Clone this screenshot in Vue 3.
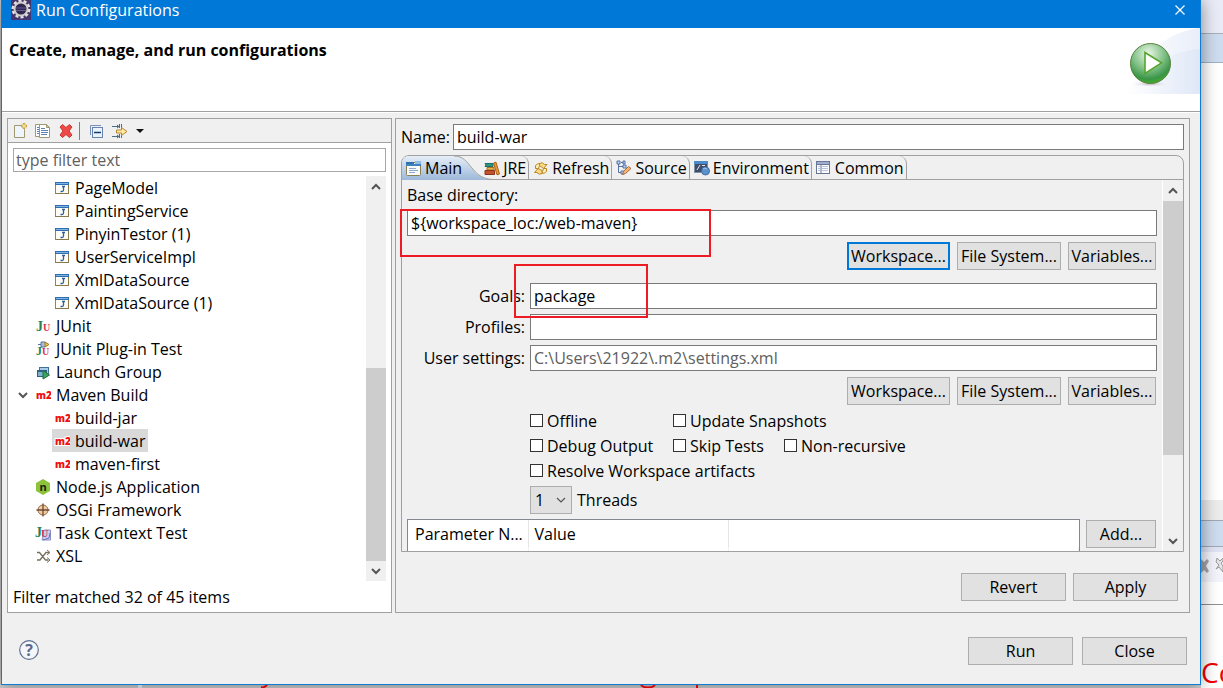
<script setup>
import { ref } from 'vue'

const icons = {
  java: '<rect x="1.5" y="2.5" width="13" height="11" fill="#fffdf5" stroke="#8a7a4a"/><path d="M1 2h14v3H1z" fill="#2f6fb0"/><path d="M2 3.5h12" stroke="#7fb4e4"/><path d="M1.500 5v8.500" stroke="#6c89a8"/><path d="M9.500 6.500v3.500q0 1.500-1.500 1.500h-1.500M8 6.500h3" stroke="#2c62a0" stroke-width="1.300" fill="none"/>',
  junit: '<text x="1" y="13" font-family="Liberation Serif, serif" font-weight="bold" font-size="14" fill="#2a8050">J</text><text x="8" y="13" font-family="Liberation Serif, serif" font-weight="bold" font-size="10" fill="#d8344f">U</text>',
  plugin: '<path d="M3 3.500h10" stroke="#52739f"/><path d="M6 1h4l2 2.500-2 2.500H6z" fill="#a9bfdc" stroke="#52739f"/><path d="M10 1l4 2.500-4 2.500z" fill="#f2c14a" stroke="#a07a20"/><text x="1" y="14" font-family="Liberation Serif, serif" font-weight="bold" font-size="12" fill="#2a8050">J</text><text x="7" y="14" font-family="Liberation Serif, serif" font-weight="bold" font-size="10" fill="#d8344f">U</text>',
  group: '<rect x="4.500" y="3.500" width="9" height="6" fill="#a8cbea" stroke="#3f7298"/><rect x="2.500" y="6.500" width="9" height="6" fill="#7fb0d4" stroke="#2f6184"/><path d="M2 7h10" stroke="#2f6184" stroke-width="2"/><path d="M8 6.500l6.500 4.500L8 15z" fill="#3aa55c" stroke="#1d7038"/>',
  maven: '<text x="1" y="12" font-family="Open Sans, sans-serif" font-weight="800" font-size="10" fill="#f01010" stroke="#fff" stroke-width="2" paint-order="stroke">m2</text>',
  node: '<path d="M8 0l7 4v8l-7 4-7-4V4z" fill="#8cc23c"/><text x="8" y="11.500" text-anchor="middle" font-family="Open Sans, sans-serif" font-weight="bold" font-size="11" fill="#16220c">n</text>',
  osgi: '<circle cx="8" cy="8" r="5" fill="#f0cfa4" stroke="#9a6a48"/><path d="M8 1.500v13M1.500 8h13" stroke="#704836" stroke-width="1.300"/>',
  task: '<path d="M9 5h6.500v10H7z" fill="#c9cdf0" stroke="#8a8fc8"/><text x="0" y="12" font-family="Liberation Serif, serif" font-weight="bold" font-size="14" fill="#2a8050">J</text><text x="6" y="12" font-family="Liberation Serif, serif" font-weight="bold" font-size="10" fill="#c83450">U</text><path d="M8 15l6-2 1-5" stroke="#6a70b8" fill="none"/>',
  xsl: '<path d="M2 4.500h2.500l6 7.500h3M2 12h3l6-7.500h3" fill="none" stroke="#75705c" stroke-width="1.300"/><path d="M12 2l3 2.500-3 2.500M12 9.500l3 2.500-3 2.500" fill="none" stroke="#75705c"/>',
  main: '<rect x=".5" y="2.500" width="14" height="13" rx="1" fill="#f7fbff" stroke="#8a8250"/><path d="M0 2h8v2H0z" fill="#2f6fb0"/><path d="M9 1h6v3H9z" fill="#8fbde6"/><path d="M0 5h15" stroke="#3f80bd" stroke-width="2"/><path d="M3 8.500h7M3 10.500h9M3 12.500h6" stroke="#8fa9c6"/>',
  jre: '<path d="M1 3.500h8v3H1l1-1.500z" fill="#2e9486" stroke="#1d6f66"/><path d="M3 7.500h7v2.500H3z" fill="#e8b24a" stroke="#a87520"/><path d="M1 10.500h9.500v4H1z" fill="#c4512e" stroke="#8c3518"/><path d="M9.500 3l2.500-.8 3.500 11.800-2.500.8z" fill="#eb9638" stroke="#ad6212"/>',
  refresh: '<path d="M6.500 5.500V3.500q3-2 5 1h2.500l-3.500 4-4-3z" fill="#f9dc83" stroke="#bd8622"/><path d="M2.500 8.500V5.500q2-2 4-2v2L5.500 8.500z" fill="#fdeeb8" stroke="#bd8622"/><path d="M9 10.500v3q-3 2-5-1H1.500l3.500-4 4 2z" fill="#f9dc83" stroke="#bd8622"/><path d="M13.500 8.500v3q-2 2-4 2v-2l1-3z" fill="#fdeeb8" stroke="#bd8622"/>',
  source: '<path d="M2.500 3v9.500h4M2.500 6.500h5M5 2.500h2" fill="none" stroke="#5573a5"/><path d="M1 1h3v3H1zM7 1h2v3H7zM7 5h3v3H7zM5 11h3v3H5z" fill="#c5d6f2" stroke="#5573a5"/><path d="M6.500 14.500l1-3 5-5 2.500 2-5.500 5z" fill="#f2b873" stroke="#a8683a"/>',
  env: '<rect x=".5" y="1.500" width="13" height="11" fill="#3e4c65" stroke="#7f90ab"/><path d="M0 1h14v3H0z" fill="#4b8bca"/><path d="M3 10l3-5M8 5.500h3" stroke="#dbe7f5"/><circle cx="11.500" cy="11" r="4" fill="#5a92cc" stroke="#416fa6"/><path d="M9 9q2-2 4 0" stroke="#a5cbea" fill="none"/>',
  common: '<rect x=".5" y="1.500" width="13" height="12" fill="#fdfeff" stroke="#6a7494"/><path d="M1 2h12v2H1z" fill="#9db0d0"/><path d="M5 4v9M1 4.500h12" stroke="#6a7494"/><path d="M2 6.500h2M6 6.500h6M2 8.500h2M6 8.500h6M2 10.500h2M6 10.500h6" stroke="#b8c4dc"/>',
  newdoc: '<path d="M2.500 2.500h7l3 4v8h-10z" fill="#eef5fc" stroke="#a09870"/><path d="M12 0v6M9 3h6" stroke="#c9a240" stroke-width="2.400"/><path d="M12 1v4M10 3h4" stroke="#fff0b0"/>',
  copy: '<path d="M.5 1.500h8v12h-8z" fill="#fff" stroke="#a09870"/><path d="M2 4.500h2M2 6.500h2M2 8.500h2M2 10.500h2" stroke="#5f82ae"/><path d="M4.500 1.500h7l3 3v10h-10z" fill="#fff" stroke="#a09870"/><path d="M11.500 1.500v3h3z" fill="#e4c878" stroke="#a09870"/><path d="M6 5.500h4M6 7.500h7M6 9.500h7M6 11.500h6" stroke="#5f82ae"/>',
  remove: '<path d="M2 4l2.500-2.500L8 4.500l3.500-3L14 4l-3 4 3 4-2.500 2.500L8 11.500l-3.500 3L2 12l3-4z" fill="#ee4b48" stroke="#c83634"/>',
  collapse: '<path d="M2.500 12V2.500H13" fill="none" stroke="#7890b8"/><rect x="4.500" y="4.500" width="10" height="10" fill="#eaf3fc" stroke="#6683b0"/><path d="M6 9.500h7" stroke="#123c70" stroke-width="1.500"/>',
  filter: '<path d="M0 3.500h7M0 13.500h7M7.500 1v4M9.500 1v4M7.500 11v4M9.500 12v3" stroke="#4c6c86"/><path d="M5 1.500l2.500 2L5 5.500zM5 11.500l2.500 2-2.500 2z" fill="#4c6c86"/><path d="M4.500 7h5V4.500L15 8.500l-5.500 4V10h-5z" fill="#ffe9a6" stroke="#b7842c"/>',
  close: '<path d="M3.500 3.500l9 9M12.500 3.500l-9 9" stroke="#fff" stroke-width="1.200"/>',
  down: '<path d="M4 6l4 4 4-4" fill="none" stroke="#555" stroke-width="2"/>',
  up: '<path d="M4 10l4-4 4 4" fill="none" stroke="#555" stroke-width="2"/>',
}

const tree = [
  { icon: 'java', text: 'PageModel', child: true },
  { icon: 'java', text: 'PaintingService', child: true },
  { icon: 'java', text: 'PinyinTestor (1)', child: true },
  { icon: 'java', text: 'UserServiceImpl', child: true },
  { icon: 'java', text: 'XmlDataSource', child: true },
  { icon: 'java', text: 'XmlDataSource (1)', child: true },
  { icon: 'junit', text: 'JUnit' },
  { icon: 'plugin', text: 'JUnit Plug-in Test' },
  { icon: 'group', text: 'Launch Group' },
  { icon: 'maven', text: 'Maven Build', open: true },
  { icon: 'maven', text: 'build-jar', child: true },
  { icon: 'maven', text: 'build-war', child: true, selected: true },
  { icon: 'maven', text: 'maven-first', child: true },
  { icon: 'node', text: 'Node.js Application' },
  { icon: 'osgi', text: 'OSGi Framework' },
  { icon: 'task', text: 'Task Context Test' },
  { icon: 'xsl', text: 'XSL' },
]

const tabs = [
  { icon: 'jre', text: 'JRE' },
  { icon: 'refresh', text: 'Refresh' },
  { icon: 'source', text: 'Source' },
  { icon: 'env', text: 'Environment' },
  { icon: 'common', text: 'Common' },
]

const tools = [
  { icon: 'newdoc', label: 'New' },
  { icon: 'copy', label: 'Duplicate' },
  { icon: 'remove', label: 'Delete' },
]

const filter = ref('')
const name = ref('build-war')
const base = ref('${workspace_loc:/web-maven}')
const goals = ref('package')
const profiles = ref('')
const settings = ref('')
const threads = ref('1')
</script>

<template>
  <div class="desktop">
    <main class="dialog">
      <header class="titlebar">
        <svg class="logo" viewBox="0 0 20 20">
          <rect width="20" height="20" fill="#43366e" />
          <circle cx="10" cy="9" r="8" fill="none" stroke="#e4e0dc" stroke-width="3" stroke-dasharray="3 2" />
          <circle cx="10" cy="9" r="6.500" fill="#2e2750" stroke="#d2cdca" stroke-width="2" />
          <path d="M5 8h10M5 10.500h10" stroke="#6b5f92" />
        </svg>
        <span class="caption">Run Configurations</span>
        <button class="plain" aria-label="Close window"><svg class="icon" viewBox="0 0 16 16" v-html="icons.close"></svg></button>
      </header>

      <section class="banner">
        <h1>Create, manage, and run configurations</h1>
        <svg class="art" viewBox="0 0 74 66">
          <defs>
            <linearGradient id="sky" x1="0" x2="1"><stop offset="0" stop-color="#fff" /><stop offset="1" stop-color="#dfe7f7" /></linearGradient>
            <radialGradient id="ball" cx=".45" cy=".25" r=".8"><stop offset="0" stop-color="#e9f6e4" /><stop offset=".5" stop-color="#7fc086" /><stop offset=".8" stop-color="#3a9548" /><stop offset="1" stop-color="#48b81c" /></radialGradient>
            <radialGradient id="shade"><stop offset="0" stop-color="#8d7f99" stop-opacity=".6" /><stop offset="1" stop-color="#fff" stop-opacity="0" /></radialGradient>
          </defs>
          <path d="M0 66Q25 5 74 0v66z" fill="url(#sky)" opacity=".7" />
          <path d="M0 66Q30 24 74 21v45z" fill="url(#sky)" />
          <ellipse cx="24" cy="56" rx="20" ry="3" fill="url(#shade)" />
          <circle cx="24.500" cy="35.500" r="20" fill="url(#ball)" stroke="#5c7f3c" />
          <path d="M19 24.500v21l16.500-10.700z" fill="#fff" stroke="#56a62c" stroke-width="1.600" />
        </svg>
      </section>

      <div class="panes">
        <section class="pane left">
          <div class="toolbar">
            <button v-for="t in tools" :key="t.icon" class="plain" :aria-label="t.label"><svg class="icon" viewBox="0 0 16 16" v-html="icons[t.icon]"></svg></button>
            <i class="sep"></i>
            <button class="plain" aria-label="Collapse all"><svg class="icon" viewBox="0 0 16 16" v-html="icons.collapse"></svg></button>
            <button class="plain menu" aria-label="Filter"><svg class="icon" viewBox="0 0 16 16" v-html="icons.filter"></svg><i class="caret"></i></button>
          </div>
          <input v-model="filter" class="filter" type="text" placeholder="type filter text" aria-label="Filter text" />
          <div class="treebox">
            <ul class="tree">
              <li v-for="n in tree" :key="n.text" :class="{ child: n.child }">
                <svg v-if="!n.child" class="twist" viewBox="0 0 16 16" v-html="n.open ? icons.down : ''"></svg>
                <span class="node" :class="{ selected: n.selected }"><svg class="icon" viewBox="0 0 16 16" v-html="icons[n.icon]"></svg>{{ n.text }}</span>
              </li>
            </ul>
            <div class="scroll">
              <svg class="icon" viewBox="0 0 16 16" v-html="icons.up"></svg>
              <div class="track low"><i></i></div>
              <svg class="icon" viewBox="0 0 16 16" v-html="icons.down"></svg>
            </div>
          </div>
          <p class="status">Filter matched 32 of 45 items</p>
        </section>

        <section class="pane right">
          <div class="namerow">
            <label for="name">Name:</label>
            <input id="name" v-model="name" type="text" />
          </div>
          <div class="folder">
            <nav class="tabs">
              <button class="tab active">
                <svg class="tabshape" viewBox="0 0 92 24">
                  <defs><linearGradient id="tabfill" x2="0" y2="1"><stop offset="0" stop-color="#e6eef8" /><stop offset="1" stop-color="#9db8d9" /></linearGradient></defs>
                  <path d="M0 24V6Q1 0 7 0H52C70 0 68 24 92 24z" fill="url(#tabfill)" />
                  <path d="M52 0C70 0 68 23.500 92 23.500" fill="none" stroke="#a0a0a0" />
                </svg>
                <svg class="icon" viewBox="0 0 16 16" v-html="icons.main"></svg>Main
              </button>
              <button v-for="t in tabs" :key="t.text" class="tab"><svg class="icon" viewBox="0 0 16 16" v-html="icons[t.icon]"></svg>{{ t.text }}</button>
            </nav>
            <div class="view">
              <div class="form">
                <label class="baselabel" for="base">Base directory:</label>
                <input id="base" v-model="base" type="text" />
                <div class="buttons">
                  <button class="btn ws focus">Workspace...</button>
                  <button class="btn fs">File System...</button>
                  <button class="btn vars">Variables...</button>
                </div>
                <div class="fields">
                  <label for="goals">Goals:</label><input id="goals" v-model="goals" type="text" />
                  <label for="profiles">Profiles:</label><input id="profiles" v-model="profiles" type="text" />
                  <label for="settings">User settings:</label><input id="settings" v-model="settings" type="text" placeholder="C:\Users\21922\.m2\settings.xml" />
                </div>
                <div class="buttons">
                  <button class="btn ws">Workspace...</button>
                  <button class="btn fs">File System...</button>
                  <button class="btn vars">Variables...</button>
                </div>
                <div class="checks">
                  <label><input type="checkbox" />Offline</label>
                  <label class="wide"><input type="checkbox" />Update Snapshots</label>
                  <label><input type="checkbox" />Debug Output</label>
                  <label><input type="checkbox" />Skip Tests</label>
                  <label><input type="checkbox" />Non-recursive</label>
                  <label class="full"><input type="checkbox" />Resolve Workspace artifacts</label>
                </div>
                <div class="threads">
                  <span class="combo">
                    <select id="threads" v-model="threads"><option>1</option><option>2</option><option>4</option></select>
                    <svg viewBox="0 0 12 12"><path d="M2 4l4 4 4-4" fill="none" stroke="#555" stroke-width="1.200" /></svg>
                  </span>
                  <label for="threads">Threads</label>
                </div>
                <div class="params">
                  <div class="tablebox">
                    <table>
                      <thead><tr><th class="c1">Parameter N...</th><th class="c2">Value</th><th></th></tr></thead>
                      <tbody><tr><td></td><td></td><td></td></tr></tbody>
                    </table>
                  </div>
                  <button class="btn add">Add...</button>
                </div>
              </div>
              <div class="scroll side">
                <svg class="icon" viewBox="0 0 16 16" v-html="icons.up"></svg>
                <div class="track high"><i></i></div>
                <svg class="icon" viewBox="0 0 16 16" v-html="icons.down"></svg>
              </div>
            </div>
            <div class="mark mark-base"></div>
            <div class="mark mark-goals"></div>
          </div>
          <div class="actions">
            <button class="btn big">Revert</button>
            <button class="btn big">Apply</button>
          </div>
        </section>
      </div>

      <footer class="footer">
        <button class="plain help" aria-label="Help">
          <svg viewBox="0 0 20 20"><circle cx="10" cy="10" r="9.300" fill="#f4f6fa" stroke="#607090" stroke-width="1.200" /><text x="10" y="15.500" text-anchor="middle" font-family="Open Sans, sans-serif" font-weight="bold" font-size="16" fill="#5a6a8e">?</text></svg>
        </button>
        <button class="btn big">Run</button>
        <button class="btn big close">Close</button>
      </footer>
    </main>

    <aside class="behind">
      <div class="b-top"></div>
      <div class="b-tab"></div>
      <div class="b-editor"></div>
      <div class="b-gap"></div>
      <div class="b-tab2"></div>
      <div class="b-tools">
        <svg viewBox="0 0 22 30"><path d="M0 9l3 3 3-3 2 2-3 5 3 5-2 2-3-3-3 3z" fill="#a4a4a8" /><path d="M16 8l3 3 3-3v3l-2 2 2 3v6l-4-5-3 2 3-4-3-3z" fill="#e4e4e4" stroke="#9a9a9a" /></svg>
      </div>
      <div class="b-console">Co</div>
    </aside>
    <svg class="below" viewBox="0 0 1201 3">
      <path d="M138 0h4v3h-4z" fill="#bfc6d6" />
      <path d="M261 2.500q4 0 6-2.500M641 0q2 2.500 7 2.500t7-2.500M697 0v3" fill="none" stroke="#d00808" stroke-width="2" />
    </svg>
  </div>
</template>

<style>
body { margin: 0; }
</style>

<style scoped>
.desktop, .desktop * { box-sizing: border-box; }
.desktop {
  position: relative;
  display: flex;
  height: 100vh;
  overflow: hidden;
  background: #d0d0d0;
  color: #000;
  font: 16px/20px "Open Sans", "Noto Sans", sans-serif;
}
button, input, select { font: inherit; color: inherit; margin: 0; border-radius: 0; }
.icon { display: block; flex: none; width: 16px; height: 16px; }
.plain { display: flex; align-items: center; padding: 0; border: 0; background: none; }

.dialog {
  position: relative;
  z-index: 1;
  display: flex;
  flex: 1;
  flex-direction: column;
  min-width: 0;
  margin: 0 0 3px 1px;
  border: solid #0f7bd7;
  border-width: 0 1px 1px;
  background: #f0f0f0;
  box-shadow: 0 0 16px rgba(0, 0, 0, 0.45);
}
.titlebar { display: flex; flex: none; height: 28px; padding: 0 12px 9px 9px; align-items: center; background: #0078d7; color: #fff; }
.logo { width: 20px; height: 20px; }
.caption { flex: 1; padding-left: 5px; }

.banner { display: flex; flex: none; justify-content: space-between; height: 85px; padding-left: 7px; border-bottom: 1px solid #fff; background: #fff; box-shadow: inset 0 -1px #a0a0a0; }
h1 { margin: 12px 0 0; font-size: 16px; line-height: 20px; }
.art { width: 74px; height: 66px; }

.panes { display: grid; flex: 1; grid-template-columns: 385px minmax(0, 1fr); gap: 3px; min-height: 0; padding: 5px 10px 0 5px; }
.pane { display: flex; flex-direction: column; min-height: 0; border: 1px solid #a0a0a0; }
.left { background: #fff; }
.toolbar { display: flex; flex: none; gap: 7px; align-items: center; height: 24px; padding-left: 4px; border-bottom: 1px solid #a0a0a0; background: #f0f0f0; }
.sep { width: 1px; height: 18px; margin: 0 1px 0 -2px; background: #808080; }
.menu { margin-left: 1px; }
.caret { margin-left: 8px; border: 4px solid transparent; border-top-color: #111; border-bottom: 0; }
input[type="text"] { display: block; width: 100%; min-width: 0; height: 26px; padding: 0 3px; border: 1px solid #7a7a7a; background: #fff; outline: 0; }
input::placeholder { color: #606060; opacity: 1; }
input.filter[type="text"] { flex: none; width: auto; height: 24px; margin: 5px 5px 4px; padding: 0 2px; border-color: #a8a8a8; }
.treebox { display: flex; flex: 1; min-height: 0; margin: 0 5px; }
.tree { flex: 1; margin: 0; padding: 0; overflow: hidden; list-style: none; }
.tree li { display: flex; height: 23px; padding-left: 2px; align-items: center; }
.tree li.child { padding-left: 39px; }
.twist { width: 16px; height: 16px; margin-right: 2px; }
.node { display: flex; gap: 5px; align-items: center; height: 23px; padding: 0 3px 0 2px; white-space: nowrap; }
.selected { background: #d9d9d9; }
.status { flex: none; margin: 6px 5px 5px; }

.scroll { display: flex; flex: none; flex-direction: column; align-items: center; width: 20px; padding: 3px 0 2px; background: #f0f0f0; }
.track { display: flex; flex: 1; flex-direction: column; align-self: stretch; margin: 2px 0; }
.track i { flex: none; background: #cdcdcd; }
.low { justify-content: flex-end; }
.low i { height: 53%; }
.high i { height: 77%; }
.side { width: 21px; border: solid #fff; border-width: 0 0 0 1px; }

.right { padding: 5px; }
.namerow { display: flex; flex: none; gap: 3px; align-items: center; margin-bottom: 5px; }
.folder { position: relative; display: flex; flex: 1; flex-direction: column; min-height: 0; border: 1px solid #a0a0a0; border-radius: 8px 8px 0 0; }
.tabs { display: flex; flex: none; height: 24px; border-bottom: 1px solid #a0a0a0; }
.tab { position: relative; display: flex; gap: 3px; align-items: center; padding: 0 2px 0 4px; border: 0; border-right: 1px solid #a0a0a0; border-radius: 0 8px 0 0; background: none; white-space: nowrap; }
.tab.active { padding: 0 18px 0 4px; border: 0; }
.tab.active .icon { z-index: 1; }
.tabshape { position: absolute; z-index: -1; top: 0; left: 0; width: 92px; height: 24px; }
.tab.active { z-index: 0; }
.tab + .tab { z-index: 1; }
.view { display: flex; flex: 1; min-height: 0; overflow: hidden; }
.form { flex: 1; min-width: 0; padding: 5px 5px 0; }
.baselabel { display: block; margin-bottom: 5px; }
.btn { flex: none; height: 28px; padding: 0; border: 1px solid #adadad; background: #e1e1e1; text-align: center; white-space: nowrap; }
.focus { border: 2px solid #0078d7; }
.buttons { display: flex; justify-content: flex-end; gap: 7px; padding: 6px 1px 0 0; }
.ws { width: 103px; }
.fs { width: 104px; }
.vars { width: 88px; }
.big { width: 105px; }
.fields { display: grid; grid-template-columns: 118px 1fr; gap: 5px; align-items: center; margin-top: 13px; text-align: right; }
.checks { display: grid; grid-template-columns: 143px 111px 1fr; grid-auto-rows: 25px; margin: 3px 0 0 123px; }
.checks label { display: flex; gap: 4px; align-items: center; white-space: nowrap; }
.wide { grid-column: span 2; }
.full { grid-column: span 3; }
input[type="checkbox"] { width: 13px; height: 13px; margin: 0; appearance: none; border: 1px solid #333; background: #fff; }
.threads { display: flex; gap: 5px; align-items: center; margin: 3px 0 5px 123px; }
.combo { display: grid; width: 42px; height: 28px; align-items: center; }
.combo > * { grid-area: 1 / 1; }
.combo select { width: 42px; height: 28px; padding: 0 4px; appearance: none; border: 1px solid #adadad; background: #e1e1e1; }
.combo svg { width: 12px; height: 12px; margin-right: 5px; justify-self: end; pointer-events: none; }
.params { display: flex; gap: 6px; padding-right: 1px; }
.params .add { width: 70px; margin-top: 1px; }
.tablebox { flex: 1; height: 120px; border: 1px solid #828790; background: #fff; }
table { width: 100%; table-layout: fixed; border-collapse: collapse; }
th { height: 27px; padding: 0 6px; border-right: 1px solid #e5e5e5; font-weight: 400; text-align: left; white-space: nowrap; }
th:last-child { border: 0; }
td { height: 23px; border-right: 1px solid #f0f0f8; }
.c1 { width: 120px; padding: 0 0 0 7px; }
.c2 { width: 200px; }
.actions { display: flex; flex: none; justify-content: flex-end; gap: 7px; padding: 21px 6px 6px 0; }

.mark { position: absolute; border: 2px solid #ed1c24; pointer-events: none; }
.mark-base { top: 53px; left: -2px; width: 311px; height: 48px; }
.mark-goals { top: 108px; left: 112px; width: 134px; height: 54px; }

.footer { display: flex; flex: none; align-items: center; height: 71px; padding: 5px 13px 0 17px; }
.help { margin: 0 auto 2px 0; }
.help svg { width: 20px; height: 20px; }
.close { margin-left: 9px; }

.behind { display: flex; flex: none; flex-direction: column; width: 22px; background: #fff; }
.b-top { height: 34px; border-bottom: 1px solid #a9afb8; background: #e9ebf7; }
.b-tab { height: 29px; border-bottom: 1px solid #9fb0c4; background: #cddcee; }
.b-editor { flex: 1; }
.b-gap { height: 20px; background: #ececec; }
.b-tab2 { height: 27px; border: solid #a0a8b4; border-width: 1px 0; background: #cddcee; }
.b-tools { height: 58px; border-bottom: 1px solid #909090; background: linear-gradient(#dfe3f3 5px, #f3f4fb 5px, #f3f4fb 35px, #fff 35px); }
.b-tools svg { display: block; width: 22px; height: 30px; margin-top: 3px; }
.b-console { height: 83px; padding-top: 48px; overflow: hidden; color: #f00000; font: 28px/38px "Open Sans", sans-serif; }
.below { position: absolute; z-index: 2; bottom: 0; left: 0; width: 1201px; height: 3px; }
</style>
